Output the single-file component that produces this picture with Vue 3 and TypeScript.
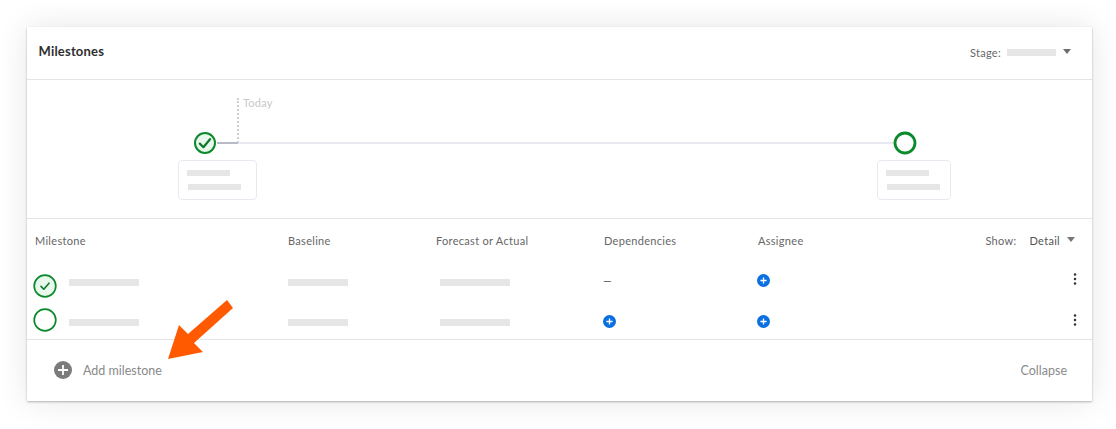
<script setup lang="ts">
interface Row {
  id: string;
  done: boolean;
  dependency: boolean;
}
const columns: string[] = ['Milestone', 'Baseline', 'Forecast or Actual', 'Dependencies', 'Assignee'];
const rows: Row[] = [
  { id: 'a', done: true, dependency: false },
  { id: 'b', done: false, dependency: true },
];
</script>

<template>
  <div class="page">
    <section class="card">
      <header class="head">
        <h2 class="title">Milestones</h2>
        <div class="stage">
          <span>Stage:</span>
          <i class="ph stage-ph"></i>
          <i class="caret stage-caret"></i>
        </div>
      </header>

      <div class="timeline">
        <span class="today-line"></span>
        <span class="today">Today</span>
        <span class="track"></span>
        <span class="track-past"></span>
        <svg class="node node-a" width="24" height="24" viewBox="0 0 24 24">
          <circle cx="12" cy="12" r="10" fill="#e9f8ec" stroke="#0b8a2c" stroke-width="2" />
          <path d="M6.8 12.6l3.6 3.6 6.6-8" fill="none" stroke="#0b7a28" stroke-width="2.2" stroke-linecap="round" stroke-linejoin="round" />
        </svg>
        <svg class="node node-b" width="24" height="24" viewBox="0 0 24 24">
          <circle cx="12" cy="12" r="10" fill="#fff" stroke="#0b8a2c" stroke-width="2.8" />
        </svg>
        <div class="tip tip-a"><i class="ph tip-short"></i><i class="ph tip-long"></i></div>
        <div class="tip tip-b"><i class="ph tip-short"></i><i class="ph tip-long"></i></div>
      </div>

      <div class="grid table-head">
        <span v-for="c in columns" :key="c" class="col-title">{{ c }}</span>
        <div class="show">
          <span class="show-label">Show:</span>
          <span class="show-value">Detail</span>
          <i class="caret show-caret"></i>
        </div>
      </div>

      <div v-for="r in rows" :key="r.id" class="grid row" :class="'row-' + r.id">
        <div class="name">
          <svg class="status" width="24" height="24" viewBox="0 0 24 24">
            <circle cx="12" cy="12" r="10.8" :fill="r.done ? '#e9f8ec' : '#fff'" stroke="#0b8a2c" stroke-width="1.7" />
            <path v-if="r.done" d="M8 12.4l2.8 2.8 5.2-6" fill="none" stroke="#0b7a28" stroke-width="1.6" stroke-linecap="round" stroke-linejoin="round" />
          </svg>
          <i class="ph cell-ph name-ph"></i>
        </div>
        <div><i class="ph cell-ph base-ph"></i></div>
        <div><i class="ph cell-ph fore-ph"></i></div>
        <div>
          <svg v-if="r.dependency" class="add" width="13" height="13" viewBox="0 0 13 13">
            <circle cx="6.5" cy="6.5" r="6.5" fill="#0a6fe0" />
            <path d="M6.5 3.4v6.2M3.4 6.5h6.2" stroke="#fff" stroke-width="1.3" />
          </svg>
          <span v-else class="dash">—</span>
        </div>
        <div class="last">
          <svg class="add" width="13" height="13" viewBox="0 0 13 13">
            <circle cx="6.5" cy="6.5" r="6.5" fill="#0a6fe0" />
            <path d="M6.5 3.4v6.2M3.4 6.5h6.2" stroke="#fff" stroke-width="1.3" />
          </svg>
          <svg class="dots" width="4" height="12" viewBox="0 0 4 12">
            <circle cx="2" cy="1.5" r="1.25" fill="#333" />
            <circle cx="2" cy="6" r="1.25" fill="#333" />
            <circle cx="2" cy="10.5" r="1.25" fill="#333" />
          </svg>
        </div>
      </div>

      <footer class="foot">
        <div class="add-milestone">
          <svg width="18" height="18" viewBox="0 0 18 18">
            <circle cx="9" cy="9" r="9" fill="#7b7b7b" />
            <path d="M9 4v10M4 9h10" stroke="#fff" stroke-width="1.8" />
          </svg>
          <span>Add milestone</span>
        </div>
        <span class="collapse">Collapse</span>
      </footer>

      <svg class="arrow" width="70" height="64" viewBox="0 0 70 64">
        <polygon points="60,1 66,9 27,44 36,53 1,60 12,26 21,35" fill="#ff5a00" />
      </svg>
    </section>
  </div>
</template>

<style>
html, body { margin: 0; background: #fff; }
</style>

<style scoped>
.page {
  width: 1116px;
  height: 429px;
  padding: 27px 24px 0 27px;
  box-sizing: border-box;
  font-family: Lato, "Liberation Sans", sans-serif;
  overflow: hidden;
}
.card {
  position: relative;
  width: 1065px;
  height: 374px;
  display: flex;
  flex-direction: column;
  background: #fff;
  box-shadow: 0 1px 2px rgba(0, 0, 0, 0.28), 0 0 30px rgba(0, 0, 0, 0.1);
}
.ph { display: block; background: #e6e6e6; }
.head {
  height: 52px;
  display: flex;
  align-items: center;
  justify-content: space-between;
  padding: 0 21px 0 11.5px;
  border-bottom: 1px solid #e3e4e8;
}
.title {
  margin: -5px 0 0;
  font-size: 13px;
  font-weight: 700;
  letter-spacing: 0.2px;
  color: #2f2f2f;
}
.stage {
  display: flex;
  align-items: center;
  margin-top: -1px;
  font-size: 11px;
  letter-spacing: 0.3px;
  color: #666;
}
.stage-ph { width: 49px; height: 7px; margin-left: 6px; }
.caret {
  display: block;
  width: 0;
  height: 0;
  border-left: 4.5px solid transparent;
  border-right: 4.5px solid transparent;
  border-top: 5px solid #6e6e6e;
}
.stage-caret { margin-left: 7px; margin-top: -2px; }
.timeline {
  position: relative;
  height: 138px;
  border-bottom: 1px solid #e3e4e8;
}
.today-line {
  position: absolute;
  left: 210px;
  top: 18px;
  height: 45px;
  border-left: 2px dotted #cfcfd3;
}
.today {
  position: absolute;
  left: 216px;
  top: 16px;
  font-size: 11px;
  line-height: 14px;
  letter-spacing: 0.2px;
  color: #c8c8c8;
}
.track {
  position: absolute;
  left: 190px;
  width: 678px;
  top: 62px;
  height: 2px;
  background: #e8e9f0;
}
.track-past {
  position: absolute;
  left: 190px;
  width: 21px;
  top: 62px;
  height: 2px;
  background: #b7bac8;
}
.node { position: absolute; top: 51px; }
.node-a { left: 166px; }
.node-b { left: 866px; }
.tip {
  position: absolute;
  top: 80px;
  height: 40px;
  box-sizing: border-box;
  border: 1.5px solid #e8eaf1;
  border-radius: 4px;
  background: #fff;
}
.tip-a { left: 151px; width: 79px; }
.tip-b { left: 850px; width: 74px; }
.tip-short { position: absolute; left: 8px; top: 8.5px; width: 43px; height: 6px; }
.tip-long { position: absolute; left: 8.5px; top: 22.5px; width: 53px; height: 6px; }
.grid {
  display: grid;
  grid-template-columns: 255px 148px 167px 154px 1fr;
  padding-left: 6px;
}
.table-head {
  position: relative;
  height: 44px;
  align-items: center;
  font-size: 11px;
  letter-spacing: 0.3px;
  color: #666;
}
.col-title { padding-left: 1px; margin-top: -1px; }
.col-title:first-child { padding-left: 2px; }
.col-title:nth-child(2) { padding-left: 0; }
.col-title:nth-child(3) { padding-left: 0; }
.show {
  position: absolute;
  right: 17px;
  top: 0;
  height: 44px;
  display: flex;
  align-items: center;
}
.show-label { margin-top: -1px; }
.show-value { margin: -1px 0 0 13px; color: #555; }
.show-caret { margin-left: 7px; margin-top: -3px; border-top-color: #777; }
.row-a { height: 40px; }
.row-b { height: 36px; }
.name { display: flex; align-items: flex-start; }
.name-ph { margin-left: 12px; width: 70px; }
.cell-ph { height: 7px; margin-top: 16px; }
.base-ph { width: 60px; }
.fore-ph { width: 70px; margin-left: 4px; }
.status { display: block; }
.row-a .status { margin-top: 11px; }
.row-b .status { margin-top: 5px; }
.add { display: block; }
.row-a .add { margin-top: 11px; }
.row-b .add { margin-top: 12px; }
.dash { display: block; margin-top: 10px; font-size: 11px; line-height: 16px; color: #555; }
.last {
  display: flex;
  align-items: flex-start;
  justify-content: space-between;
  padding-right: 15px;
}
.row-a .dots { margin-top: 10px; }
.row-b .dots { margin-top: 11px; }
.foot {
  flex: 1;
  display: flex;
  align-items: center;
  justify-content: space-between;
  padding: 0 25px 0 27px;
  border-top: 1px solid #e3e4e8;
  font-size: 12.5px;
  color: #8a8a8a;
}
.add-milestone { display: flex; align-items: center; gap: 11px; }
.add-milestone span, .collapse { margin-top: -1px; }
.add-milestone svg { display: block; margin-top: -1px; }
.arrow { position: absolute; left: 140px; top: 272px; }
</style>
